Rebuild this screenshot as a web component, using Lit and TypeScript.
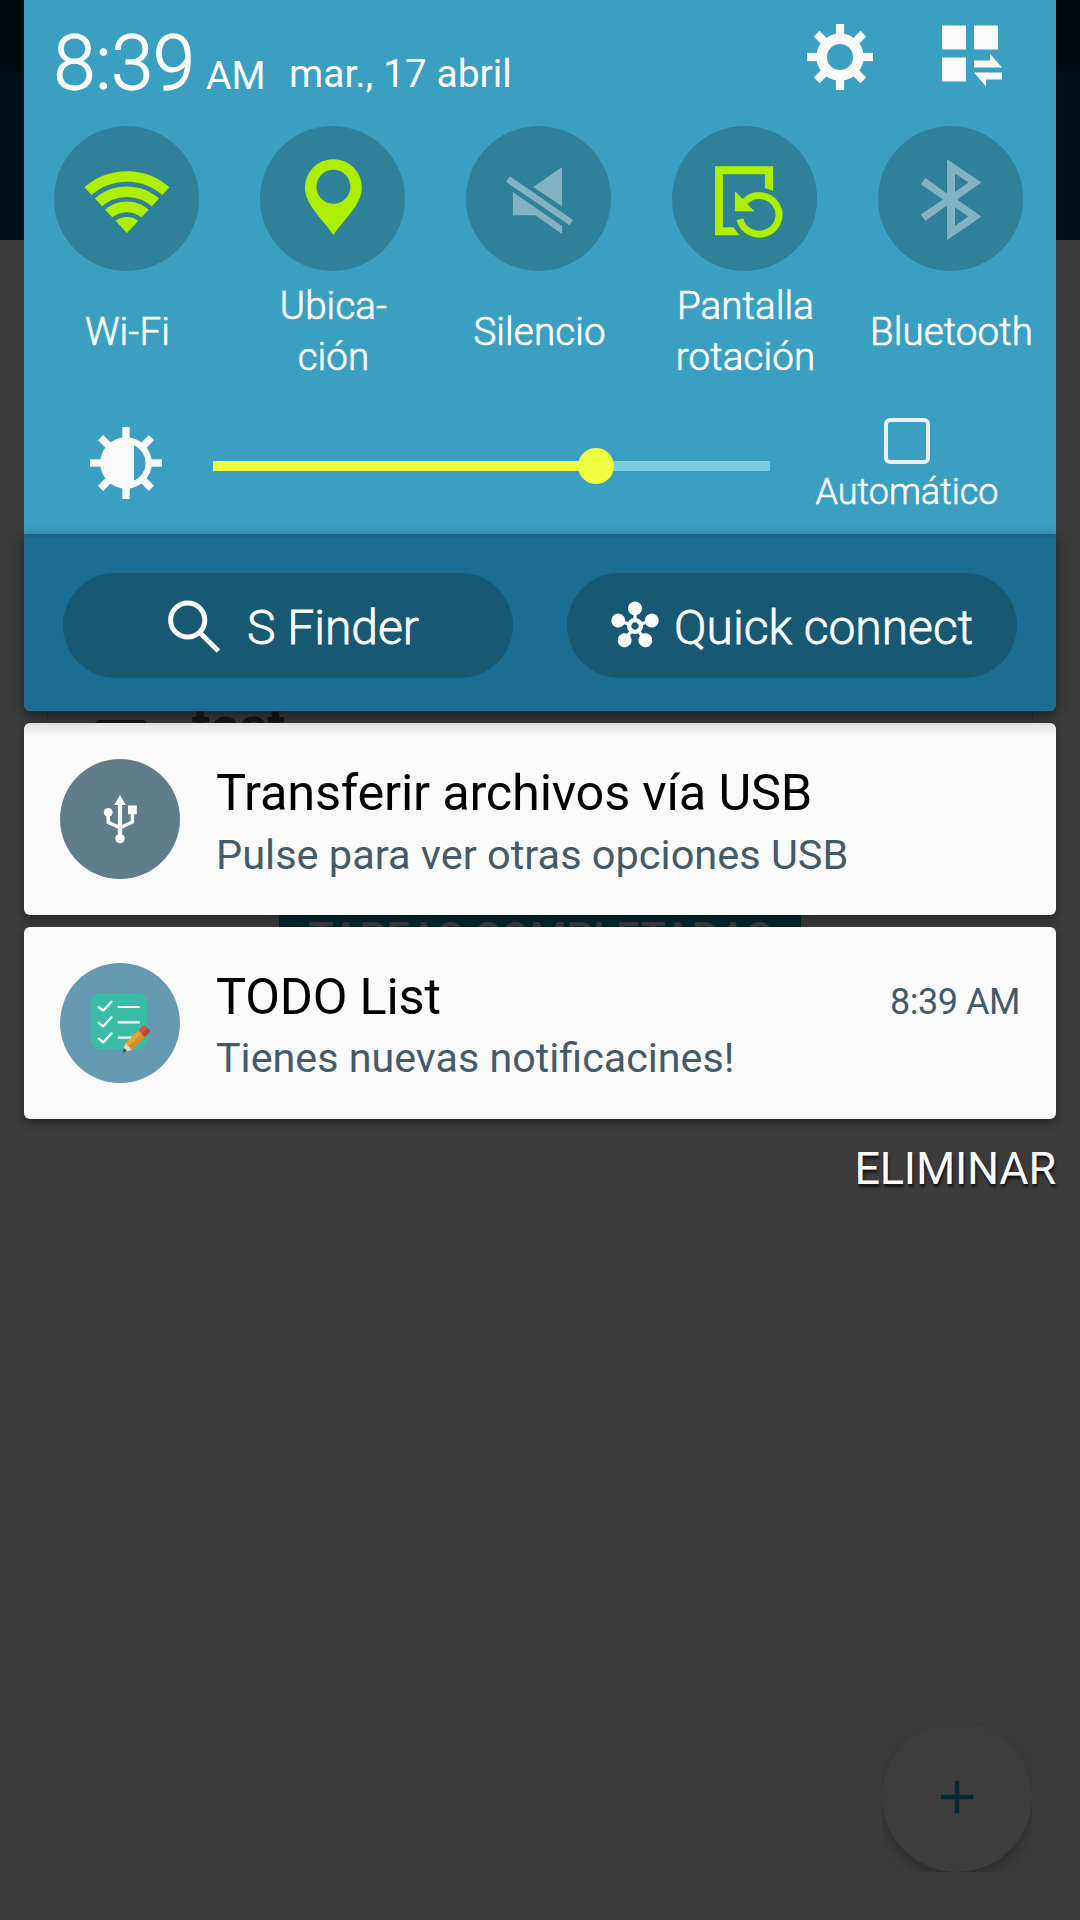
import { LitElement, html, css, svg, nothing, type TemplateResult, type SVGTemplateResult } from "lit";
import { customElement, property } from "lit/decorators.js";

const ANGLES = [0, 45, 90, 135, 180, 225, 270, 315];

/* Every glyph is drawn around a (0,0) centre, one unit per pixel. */
const GLYPHS: Record<string, SVGTemplateResult> = {
  wifi: svg`
    <clipPath id="fan"><path d="M.4 34.4L-84.6-57H85.4Z"/></clipPath>
    <g clip-path="url(#fan)" fill="none" stroke="currentColor" stroke-width="10.6">
      <circle cx=".4" cy="36.7" r="58.7"/><circle cx=".4" cy="36.7" r="43.5"/><circle cx=".4" cy="36.7" r="28.3"/>
      <circle cx=".4" cy="36.7" r="18.3" fill="currentColor" stroke="none"/>
    </g>`,
  pin: svg`<path transform="translate(.9)" fill-rule="evenodd" d="M0 36.7C-7 24.5-28.5 7-28.5-10.8A28.5 28.5 0 0 1 28.5-10.8C28.5 7 7 24.5 0 36.7ZM0 5.2A17 17 0 0 0 0-28.8A17 17 0 0 0 0 5.2Z"/>`,
  mute: svg`<path d="M-5.3-11.6L23.5-31.3V7.7ZM-28.5-22.3L-32.5-16.6L31.1 26.7L34.5 21.4ZM-25.6-6.6V16.7H-3.1L23.5 35.4V27.4Z"/>`,
  rotate: svg`
    <path d="M-29.5-32.3H28.6V-7.6L20.4-10.6V-24.3H-21.6V28.7H-11L-5.1 36.7H-29.5ZM-9.6-7.3V12.7H10L2.5 5.2L-2.2 0Z"/>
    <path fill="none" stroke="currentColor" stroke-width="7" d="M-4.6 20.7A19.8 19.3 0 1 0 -.4 3.8"/>`,
  bluetooth: svg`<path fill-rule="evenodd" d="M-3.4-39.3L31-16L6.6 1L31 18L-3.4 41.4V6.8L-25.1 22.4L-29.6 16L-7.6 1L-29.6-14.3L-25.1-20.6L-3.4-4.9ZM4.5-25V-6.6L17.9-16ZM4.5 8.9V27.6L17.9 18Z"/>`,
  gear: svg`
    <circle r="18.3" fill="none" stroke="currentColor" stroke-width="10.6"/>
    ${ANGLES.map((a) => svg`<rect x="-4.1" y="-33" width="8.2" height="13" transform="rotate(${a})"/>`)}`,
  edit: svg`<path d="M-30-30.5H-6V-6.5H-30ZM2-30.5H26V-6.5H2ZM-30 1.5H-6V25.5H-30ZM2 4.5H18V-2.2L30 11.5H2ZM2 16.5H30V23.5H14V30.5Z"/>`,
  brightness: svg`
    <path fill-rule="evenodd" d="M0-25.8A25.8 25.8 0 0 1 0 25.8A25.8 25.8 0 0 1 0-25.8ZM8-17.8V17.8A19.5 19.5 0 0 0 8-17.8Z"/>
    ${ANGLES.map((a) => svg`<rect x="-3.7" y="-36" width="7.4" height="12" transform="rotate(${a})"/>`)}`,
  search: svg`
    <g fill="none" stroke="currentColor" stroke-width="5"><circle cx="-6.3" cy="-6" r="17.1"/><path d="M6 6.8L24.4 25"/></g>`,
  hub: svg`
    <circle r="5.9" fill="none" stroke="currentColor" stroke-width="4.4"/>
    ${[0, 72, 144, 216, 288].map((a) => svg`<g transform="rotate(${a})"><circle cy="-17.6" r="7"/><path d="M-1.6-12H1.6V-6H-1.6Z"/></g>`)}`,
  usb: svg`
    <path d="M0-24L5.8-14H-5.8ZM8-13.4H16.8V-4.8H8Z"/><circle cx="-11.8" cy="-6.7" r="4.4"/><circle cy="19.6" r="4.7"/>
    <path fill="none" stroke="currentColor" stroke-width="3.4" d="M-11.8-4V3.4L0 8.8L12.4 3V-6"/><path d="M-2.1-16H2.1V17H-2.1Z"/>`,
  todo: svg`
    <rect x="-29.4" y="-30" width="56.4" height="56.5" rx="9" fill="#3bbca6"/>
    <g fill="none" stroke="#fff" stroke-width="2.2" stroke-linecap="round" stroke-linejoin="round">
      <path d="M-21.4-16L-16.7-12.5L-8.5-21.3M-21.4-.2L-16.7 3.3L-8.5-5.8M-21.4 15.6L-16.7 19.3L-8.5 10.4M-1.4-16H19M-1.4-.6H19M-1.4 14.6H12"/>
    </g>
    <g transform="translate(2.4 29.7) rotate(-44.5)">
      <path fill="#e6d8c4" d="M2-1.4L9-4.6V4.6L2 1.4Z"/><path fill="#5c5350" d="M0 0L3-2H4.5V2H3Z"/>
      <path fill="#f0a030" d="M9-4.6H28V0H9Z"/><path fill="#dd8a22" d="M9 0H28V4.6H9Z"/>
      <path fill="#dc5048" d="M27-4.6H33A2.6 2.6 0 0 1 35.4-2V0H27Z"/><path fill="#ab463f" d="M27 0H35.4V2A2.6 2.6 0 0 1 33 4.6H27Z"/>
    </g>`,
  plus: svg`<path fill="none" stroke="currentColor" stroke-width="4.6" d="M0-16.3V16.3M-16.3 0H16.3"/>`,
};

@customElement("ui-glyph")
class UiGlyph extends LitElement {
  @property() name = "";
  @property({ type: Number }) size = 80;

  static styles = css`
    :host { display: block; flex: none; }
    .glyph { display: block; fill: currentColor; }
  `;

  render() {
    const s = this.size;
    return html`<svg class="glyph" width=${s} height=${s} viewBox="${-s / 2} ${-s / 2} ${s} ${s}">${GLYPHS[this.name]}</svg>`;
  }
}

@customElement("quick-toggle")
class QuickToggle extends LitElement {
  @property() icon = "";
  @property({ type: Boolean }) on = false;
  @property({ attribute: false }) lines: string[] = [];

  static styles = css`
    :host { display: flex; flex-direction: column; align-items: center; }
    .disc {
      width: 145px; height: 145px; border-radius: 50%; background: #2f8099; color: #83b3c3;
      display: flex; align-items: center; justify-content: center;
    }
    .disc.on { color: #aeee00; }
    .label {
      height: 102px; margin-top: 9px; display: flex; flex-direction: column; justify-content: center; text-indent: 2px;
      text-align: center; font-size: 38.5px; line-height: 51px; white-space: nowrap; font-weight: 300;
      letter-spacing: 0.12px; -webkit-text-stroke: 0.7px currentColor;
    }
  `;

  render() {
    return html`
      <div class="disc ${this.on ? "on" : ""}"><ui-glyph name=${this.icon} size="91"></ui-glyph></div>
      <div class="label">${this.lines.map((l) => html`<span>${l}</span>`)}</div>
    `;
  }
}

@customElement("notification-card")
class NotificationCard extends LitElement {
  @property() icon = "";
  @property() heading = "";
  @property() detail = "";
  @property() time = "";

  static styles = css`
    :host {
      display: flex; box-sizing: border-box; height: 192px; padding: 36px 36px 0; gap: 36px;
      background: #fafafa; border-radius: 6px; box-shadow: 0 4px 10px rgba(0, 0, 0, 0.38);
    }
    .disc {
      flex: none; width: 120px; height: 120px; border-radius: 50%; background: #607d8b; color: #fff;
      display: flex; align-items: center; justify-content: center;
    }
    .disc.todo { background: #6699b2; }
    .body { flex: 1; display: flex; flex-direction: column; }
    .top { display: flex; justify-content: space-between; height: 62px; }
    .heading { font-size: 50.5px; line-height: 68px; color: #000; letter-spacing: -0.22px; }
    .time { font-size: 36px; line-height: 78px; color: #455a68; letter-spacing: -0.45px; }
    .detail { font-size: 41.5px; line-height: 67px; color: #455a68; }
    .detail.todo { font-size: 41.25px; }
  `;

  render() {
    return html`
      <div class="disc ${this.icon}"><ui-glyph name=${this.icon}></ui-glyph></div>
      <div class="body">
        <div class="top">
          <div class="heading">${this.heading}</div>
          ${this.time ? html`<div class="time">${this.time}</div>` : nothing}
        </div>
        <div class="detail ${this.icon}">${this.detail}</div>
      </div>
    `;
  }
}

@customElement("app-root")
class AppRoot extends LitElement {
  static styles = css`
    :host {
      display: block; position: relative; width: 1080px; height: 1920px; overflow: hidden;
      background: #3c3c3c; color: #fafafa; font-family: Roboto, "Liberation Sans", sans-serif;
    }

    /* dimmed app under the shade */
    .backdrop { position: absolute; inset: 0; display: flex; flex-direction: column; align-items: center; }
    .status { width: 100%; height: 72px; background: #000b0f; }
    .toolbar { width: 100%; height: 168px; background: #011017; }
    .task {
      box-sizing: border-box; width: 986px; height: 150px; margin-top: 435px; padding: 21px 0 0 47px;
      border: 1px solid #333; display: flex; gap: 45px; color: #181818;
    }
    .task-box { box-sizing: border-box; width: 52px; height: 52px; margin-top: 23px; border: 6px solid #181818; border-radius: 5px; }
    .task-name { font-size: 54px; line-height: 60px; font-weight: 700; }
    .completed {
      width: 522px; height: 96px; margin-top: 60px; background: #04282d; color: #3c3c3c; text-align: center;
      font-size: 42px; line-height: 106px; font-weight: 500; white-space: nowrap;
    }
    .fab-area { position: absolute; left: 882px; top: 1722px; width: 150px; height: 150px; overflow: hidden; }
    .fab {
      width: 150px; height: 150px; border-radius: 50%; background: #3d3d3d; color: #052b31;
      box-shadow: 0 8px 14px rgba(0, 0, 0, 0.26); display: flex; align-items: center; justify-content: center;
    }

    .shade { position: relative; width: 1032px; margin: 0 auto; display: flex; flex-direction: column; }
    .panel { border-radius: 0 0 6px 6px; background: #1b6d92; }
    .settings { height: 534px; background: #3b9fc1; }
    .head { display: flex; align-items: flex-start; height: 126px; white-space: nowrap; }
    .clock {
      margin-left: 29.5px; width: 142.5px; font-size: 75.5px; line-height: 127px; font-weight: 300;
      -webkit-text-stroke: 1.3px currentColor;
    }
    .ampm { margin-left: 10px; width: 67px; font-size: 39px; line-height: 152px; }
    .date { margin-left: 16px; flex: 1; font-size: 39px; line-height: 149px; }
    .head-icon { margin-top: 17px; }
    .head-icon.edit { margin: 16px 44px 0 52px; }
    .toggles { display: grid; grid-template-columns: repeat(5, 206px); margin-left: -0.5px; }
    .brightness { display: flex; height: 151px; }
    .sun { margin: 41px 0 0 62px; }
    .slider { margin: 66px 0 0 47px; width: 557px; height: 36px; display: flex; align-items: center; }
    .fill { height: 10px; background: #eeff41; }
    .thumb { width: 36px; height: 36px; margin: 0 -18px; border-radius: 50%; background: #eeff41; z-index: 1; }
    .rest { flex: 1; height: 10px; background: #7acbde; }
    .auto { margin: 36px 0 0 44px; display: flex; flex-direction: column; align-items: center; width: 186px; }
    .check { box-sizing: border-box; width: 46px; height: 46px; border: 4px solid #e9f2f6; border-radius: 6px; }
    .auto-label {
      font-size: 36px; line-height: 50px; margin-top: 3px; font-weight: 300; white-space: nowrap;
      -webkit-text-stroke: 0.6px currentColor;
    }

    .finders {
      display: flex; gap: 54px; height: 177px; box-sizing: border-box; padding: 39px 39px 0;
      border-radius: 0 0 6px 6px; background: linear-gradient(#175e7f, #1b6d92 5px);
      box-shadow: 0 5px 14px rgba(0, 0, 0, 0.5);
    }
    .pill {
      box-sizing: border-box; width: 450px; height: 105px; border-radius: 53px; background: #175873;
      display: flex; align-items: center; font-size: 48px; font-weight: 300; white-space: nowrap;
      -webkit-text-stroke: 0.8px currentColor;
    }
    .pill.finder { padding-left: 101px; gap: 23px; }
    .pill.connect { padding-left: 38px; gap: 9px; }
    .pill-text { line-height: 104px; padding-top: 5px; }
    .list { position: relative; display: flex; flex-direction: column; gap: 12px; margin-top: 12px; }
    .list::before {
      content: ""; position: absolute; left: 0; right: 0; top: 0; height: 12px; z-index: 1; border-radius: 6px 6px 0 0;
      background: linear-gradient(rgba(0, 0, 0, 0.1), rgba(0, 0, 0, 0));
    }
    .clear {
      align-self: flex-end; margin-top: 20px; font-size: 45px; line-height: 60px; letter-spacing: -0.2px;
      text-shadow: 1px 3px 3px rgba(0, 0, 0, 0.75);
    }
  `;

  private brightness = 383 / 557;

  private toggles = [
    { icon: "wifi", on: true, lines: ["Wi-Fi"] },
    { icon: "pin", on: true, lines: ["Ubica-", "ción"] },
    { icon: "mute", on: false, lines: ["Silencio"] },
    { icon: "rotate", on: true, lines: ["Pantalla", "rotación"] },
    { icon: "bluetooth", on: false, lines: ["Bluetooth"] },
  ];

  private renderBackdrop(): TemplateResult {
    return html`
      <div class="backdrop">
        <div class="status"></div>
        <div class="toolbar"></div>
        <div class="task"><div class="task-box"></div><div class="task-name">test</div></div>
        <div class="completed">TAREAS COMPLETADAS</div>
        <div class="fab-area"><div class="fab"><ui-glyph name="plus" size="60"></ui-glyph></div></div>
      </div>
    `;
  }

  render() {
    return html`
      ${this.renderBackdrop()}
      <div class="shade">
        <div class="panel">
          <div class="settings">
            <div class="head">
              <div class="clock">8:39</div>
              <div class="ampm">AM</div>
              <div class="date">mar., 17 abril</div>
              <ui-glyph class="head-icon" name="gear" size="80"></ui-glyph>
              <ui-glyph class="head-icon edit" name="edit" size="80"></ui-glyph>
            </div>
            <div class="toggles">
              ${this.toggles.map((t) => html`<quick-toggle icon=${t.icon} ?on=${t.on} .lines=${t.lines}></quick-toggle>`)}
            </div>
            <div class="brightness">
              <ui-glyph class="sun" name="brightness" size="80"></ui-glyph>
              <div class="slider">
                <div class="fill" style="width:${this.brightness * 100}%"></div>
                <div class="thumb"></div>
                <div class="rest"></div>
              </div>
              <div class="auto"><div class="check"></div><div class="auto-label">Automático</div></div>
            </div>
          </div>
          <div class="finders">
            <div class="pill finder"><ui-glyph name="search" size="60"></ui-glyph><span class="pill-text">S Finder</span></div>
            <div class="pill connect"><ui-glyph name="hub" size="60"></ui-glyph><span class="pill-text">Quick connect</span></div>
          </div>
        </div>
        <div class="list">
          <notification-card icon="usb" heading="Transferir archivos vía USB" detail="Pulse para ver otras opciones USB"></notification-card>
          <notification-card icon="todo" heading="TODO List" detail="Tienes nuevas notificacines!" time="8:39 AM"></notification-card>
        </div>
        <div class="clear">ELIMINAR</div>
      </div>
    `;
  }
}
